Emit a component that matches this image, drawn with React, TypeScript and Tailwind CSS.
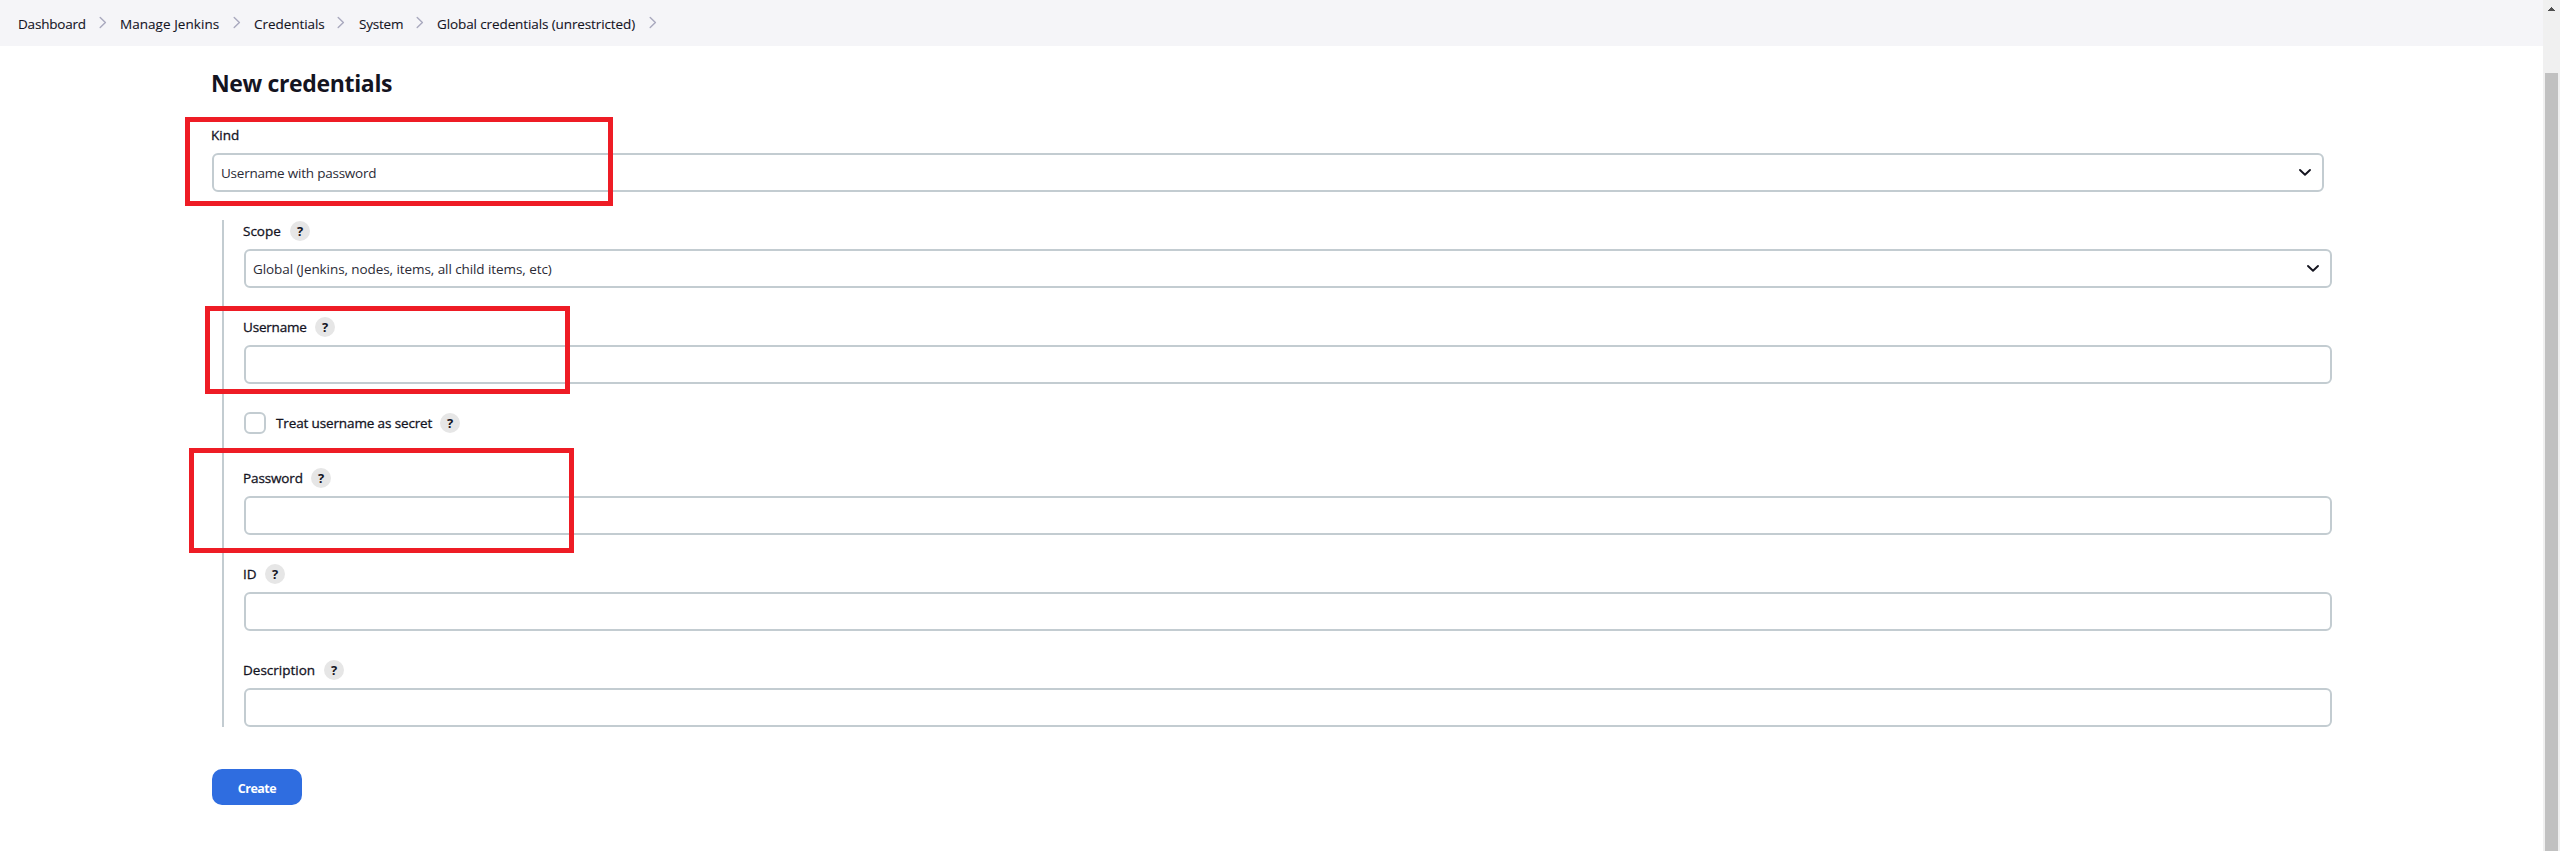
import type { ReactNode } from "react";

function Separator() {
  return (
    <svg width="8" height="13" viewBox="0 0 8 13" fill="none" className="-mt-[2px] shrink-0">
      <path d="M1.2 1.5L6.4 6.5L1.2 11.5" stroke="#a9a9be" strokeWidth="1.4" strokeLinecap="round" strokeLinejoin="round" />
    </svg>
  );
}

function Crumb({ children, className }: { children: ReactNode; className: string }) {
  return (
    <li className={`flex items-center ${className}`}>
      <a className="grow whitespace-nowrap [-webkit-text-stroke:0.1px]">{children}</a>
      <Separator />
    </li>
  );
}

function Help() {
  return (
    <span className="flex size-5 shrink-0 items-center justify-center rounded-full bg-[#e6e6e6] text-[13px] leading-5 font-bold [-webkit-text-stroke:0]">
      ?
    </span>
  );
}

function Select({ children }: { children: ReactNode }) {
  return (
    <div className="flex h-[39px] items-center justify-between rounded-[6px] border-2 border-[#c3ccd1] pt-px pr-[10px] pl-[7px] text-[#2b2b36]">
      {children}
      <svg width="14" height="9" viewBox="0 0 14 9" fill="none" className="-mt-px">
        <path d="M2 2L7 6.8L12 2" stroke="#14141f" strokeWidth="1.9" strokeLinecap="round" strokeLinejoin="round" />
      </svg>
    </div>
  );
}

function Field({ label, children, className = "mt-[29px]" }: { label: ReactNode; children?: ReactNode; className?: string }) {
  return (
    <div className={className}>
      <div className="mb-2 -ml-px flex h-5 items-center gap-2 font-medium [-webkit-text-stroke:0.3px]">
        {label}
        <Help />
      </div>
      {children ?? <input className="block h-[39px] w-full rounded-[6px] border-2 border-[#c3ccd1] bg-white" />}
    </div>
  );
}

export default function App() {
  return (
    <div className="relative flex h-[851px] w-[2560px] overflow-hidden bg-white font-['Open_Sans','Noto_Sans',sans-serif] text-[13.5px] leading-5 text-[#14141f]">
      <div className="flex w-[2543px] flex-col">
        <ol className="flex h-[46px] items-center bg-[#f5f5f8] pt-px pl-[18px]">
          <Crumb className="w-[89px] tracking-[-0.2px]">Dashboard</Crumb>
          <Crumb className="ml-[13px] w-[121px] tracking-[0.05px]">Manage Jenkins</Crumb>
          <Crumb className="ml-[13px] w-[91px] tracking-[-0.05px]">Credentials</Crumb>
          <Crumb className="ml-[14px] w-[65px] tracking-[-0.2px]">System</Crumb>
          <Crumb className="ml-[13px] w-[220px] tracking-[-0.11px]">Global credentials (unrestricted)</Crumb>
        </ol>

        <main className="w-[2332px] pl-[212px]">
          <h1 className="mt-[21px] -ml-px text-[23px] leading-8 font-bold tracking-[-0.35px]">New credentials</h1>

          <div className="mt-[26px] mr-2">
            <div className="mb-[8px] -ml-px h-5 font-medium [-webkit-text-stroke:0.3px]">Kind</div>
            <Select>
              <span className="tracking-[-0.22px]">Username with password</span>
            </Select>
          </div>

          <div className="mt-[28px] ml-[10px] border-l-2 border-[#c3ccd1] pt-px pl-5">
            <Field className="" label={<span className="w-[39px]">Scope</span>}>
              <Select>
                <span className="tracking-[-0.08px]">Global (Jenkins, nodes, items, all child items, etc)</span>
              </Select>
            </Field>
            <Field label={<span className="w-[64px] tracking-[-0.2px]">Username</span>} />
            <div className="mt-[28px] mb-[34px] flex h-[22px] items-center font-medium [-webkit-text-stroke:0.3px]">
              <span className="mr-[10px] size-[22px] rounded-[6px] border-2 border-[#c3ccd1]" />
              <span className="mr-2 w-[156px] tracking-[-0.13px] whitespace-nowrap">Treat username as secret</span>
              <Help />
            </div>
            <Field className="" label={<span className="w-[60px] tracking-[-0.12px]">Password</span>} />
            <Field label={<span className="w-[14px]">ID</span>} />
            <Field label={<span className="w-[73px]">Description</span>} />
          </div>

          <button className="mt-[42px] flex h-9 w-[90px] items-center justify-center rounded-[10px] bg-[#2f6de0] pt-[3px] text-[12.5px] font-bold tracking-[-0.5px] text-white">
            Create
          </button>
        </main>
      </div>

      <div className="flex w-[17px] flex-col items-center bg-[#f0f0f0] pt-[7px]">
        <svg width="7" height="4" viewBox="0 0 7 4" shapeRendering="crispEdges" className="shrink-0">
          <path d="M3 0h1v1h1v1h1v1h1v1H0V3h1V2h1V1h1z" fill="#505050" />
        </svg>
        <div className="mt-[62px] w-[13px] grow bg-[#c1c1c1]" />
      </div>

      <div className="absolute top-[117px] left-[185px] h-[89px] w-[428px] border-5 border-[#ee1c25]" />
      <div className="absolute top-[306px] left-[205px] h-[88px] w-[365px] border-5 border-[#ee1c25]" />
      <div className="absolute top-[448px] left-[189px] h-[105px] w-[385px] border-5 border-[#ee1c25]" />
    </div>
  );
}
